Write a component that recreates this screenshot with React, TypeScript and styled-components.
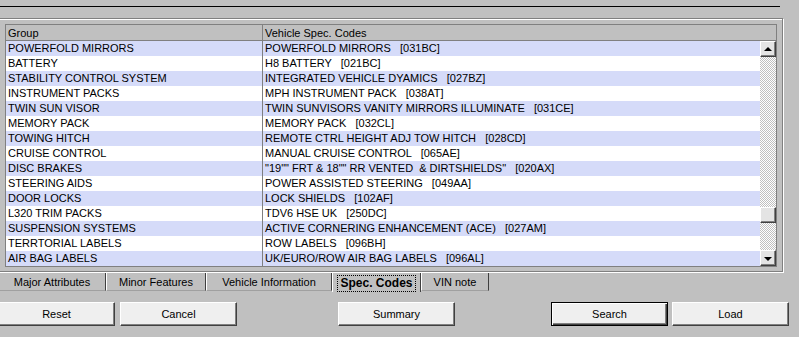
import React from "react";
import styled, { createGlobalStyle } from "styled-components";

const GlobalStyle = createGlobalStyle`
  html, body {
    margin: 0;
    padding: 0;
    background: #c0c0c0;
    overflow: hidden;
  }
  body {
    font-family: "Liberation Sans", Arial, sans-serif;
    font-size: 11px;
    color: #000;
  }
`;

const Screen = styled.div`
  width: 799px;
  height: 337px;
  overflow: hidden;
  background: #c0c0c0;
  display: flex;
  flex-direction: column;
`;

const TopRule = styled.div`
  margin-top: 6px;
  width: 780px;
  height: 1px;
  background: #000;
  flex: none;
`;

const Frame = styled.div`
  margin-top: 11px;
  margin-left: -2px;
  width: 785px;
  height: 254px;
  box-sizing: border-box;
  border: 1px solid #808080;
  box-shadow: 1px 1px 0 #fff, inset 1px 1px 0 #fff;
  padding: 5px 0 0 6px;
  flex: none;
`;

const ListBox = styled.div`
  width: 772px;
  height: 243px;
  box-sizing: border-box;
  border: 1px solid #808080;
  display: flex;
  flex-direction: column;
  background: #fff;
`;

const HeaderRow = styled.div`
  display: flex;
  height: 16px;
  box-sizing: border-box;
  background: #c0c0c0;
  border-bottom: 1px solid #808080;
  flex: none;
`;

const HeaderCell = styled.div<{ $w?: number }>`
  ${(p) => (p.$w ? `width: ${p.$w}px; flex: none;` : "flex: 1;")}
  box-sizing: border-box;
  padding: 1px 0 0 2px;
  line-height: 15px;
  white-space: pre;
  ${(p) => (p.$w ? "border-right: 1px solid #808080;" : "")}
`;

const Body = styled.div`
  display: flex;
  flex: 1;
`;

const Rows = styled.div`
  width: 754px;
  display: flex;
  flex-direction: column;
`;

const Row = styled.div<{ $alt: boolean }>`
  display: flex;
  height: 15px;
  background: ${(p) => (p.$alt ? "#d5dbf9" : "#ffffff")};
`;

const Cell = styled.div<{ $w?: number }>`
  ${(p) => (p.$w ? `width: ${p.$w}px; flex: none; border-right: 1px solid #7f7f7f;` : "flex: 1;")}
  box-sizing: border-box;
  padding-left: 2px;
  line-height: 15px;
  white-space: pre;
  overflow: hidden;
`;

const ScrollBar = styled.div`
  width: 16px;
  display: flex;
  flex-direction: column;
  background: repeating-conic-gradient(#c0c0c0 0 25%, #ffffff 0 50%) 0 0 / 2px 2px;
`;

const ScrollButton = styled.div`
  width: 16px;
  height: 16px;
  box-sizing: border-box;
  background: #e4e4e4;
  border-top: 1px solid #fff;
  border-left: 1px solid #fff;
  border-right: 1px solid #404040;
  border-bottom: 1px solid #404040;
  box-shadow: inset -1px -1px 0 #808080;
  display: flex;
  align-items: center;
  justify-content: center;
  flex: none;
`;

const Track = styled.div`
  flex: 1;
  display: flex;
  flex-direction: column;
`;

const Thumb = styled(ScrollButton)`
  margin-top: 150px;
`;

const Arrow = styled.div<{ $down?: boolean }>`
  width: 0;
  height: 0;
  border-left: 4px solid transparent;
  border-right: 4px solid transparent;
  ${(p) =>
    p.$down
      ? "border-top: 4px solid #000; margin-top: 1px;"
      : "border-bottom: 4px solid #000; margin-top: -1px;"}
`;

const TabStrip = styled.div`
  margin-top: 1px;
  margin-left: -2px;
  display: flex;
  align-items: flex-start;
  height: 19px;
  flex: none;
`;

const Tab = styled.div<{ $w: number; $active?: boolean }>`
  width: ${(p) => p.$w}px;
  height: ${(p) => (p.$active ? 19 : 18)}px;
  box-sizing: border-box;
  padding-top: 1px;
  border-left: 1px solid #fff;
  border-right: 1px solid #404040;
  ${(p) => (p.$active ? "" : "border-bottom: 1px solid #a0a0a0;")}
  display: flex;
  align-items: center;
  justify-content: center;
  font-weight: ${(p) => (p.$active ? "bold" : "normal")};
  font-size: ${(p) => (p.$active ? "12px" : "11px")};
  white-space: nowrap;
  flex: none;
`;

const FocusLabel = styled.span`
  border: 1px dotted #000;
  padding: 1px 2px 1px 2px;
  line-height: 13px;
`;

const ButtonRow = styled.div`
  margin-top: 10px;
  margin-left: -2px;
  display: flex;
  flex: none;
`;

const Button = styled.div<{ $gap?: number; $default?: boolean }>`
  margin-left: ${(p) => p.$gap ?? 0}px;
  width: 117px;
  height: 24px;
  box-sizing: border-box;
  background: #efefef;
  display: flex;
  align-items: center;
  justify-content: center;
  ${(p) =>
    p.$default
      ? `border: 1px solid #000;
         box-shadow: inset 1px 1px 0 #fff, inset -1px -1px 0 #404040, inset -2px -2px 0 #808080;`
      : `border-top: 1px solid #fff;
         border-left: 1px solid #fff;
         border-right: 1px solid #404040;
         border-bottom: 1px solid #404040;
         box-shadow: inset -1px -1px 0 #808080;`}
  flex: none;
`;

const rows: [string, string][] = [
  ["POWERFOLD MIRRORS", "POWERFOLD MIRRORS   [031BC]"],
  ["BATTERY", "H8 BATTERY   [021BC]"],
  ["STABILITY CONTROL SYSTEM", "INTEGRATED VEHICLE DYAMICS   [027BZ]"],
  ["INSTRUMENT PACKS", "MPH INSTRUMENT PACK   [038AT]"],
  ["TWIN SUN VISOR", "TWIN SUNVISORS VANITY MIRRORS ILLUMINATE   [031CE]"],
  ["MEMORY PACK", "MEMORY PACK   [032CL]"],
  ["TOWING HITCH", "REMOTE CTRL HEIGHT ADJ TOW HITCH   [028CD]"],
  ["CRUISE CONTROL", "MANUAL CRUISE CONTROL   [065AE]"],
  ["DISC BRAKES", "\"19\"\" FRT & 18\"\" RR VENTED  & DIRTSHIELDS\"   [020AX]"],
  ["STEERING AIDS", "POWER ASSISTED STEERING   [049AA]"],
  ["DOOR LOCKS", "LOCK SHIELDS   [102AF]"],
  ["L320 TRIM PACKS", "TDV6 HSE UK   [250DC]"],
  ["SUSPENSION SYSTEMS", "ACTIVE CORNERING ENHANCEMENT (ACE)   [027AM]"],
  ["TERRTORIAL LABELS", "ROW LABELS   [096BH]"],
  ["AIR BAG LABELS", "UK/EURO/ROW AIR BAG LABELS   [096AL]"],
];

const tabs: { label: string; w: number; active?: boolean }[] = [
  { label: "Major Attributes", w: 108 },
  { label: "Minor Features", w: 100 },
  { label: "Vehicle Information", w: 126 },
  { label: "Spec. Codes", w: 89, active: true },
  { label: "VIN note", w: 68 },
];

export default function App() {
  return (
    <>
      <GlobalStyle />
      <Screen>
        <TopRule />
        <Frame>
          <ListBox>
            <HeaderRow>
              <HeaderCell $w={257}>Group</HeaderCell>
              <HeaderCell>Vehicle Spec. Codes</HeaderCell>
            </HeaderRow>
            <Body>
              <Rows>
                {rows.map(([g, c], i) => (
                  <Row key={i} $alt={i % 2 === 0}>
                    <Cell $w={257}>{g}</Cell>
                    <Cell>{c}</Cell>
                  </Row>
                ))}
              </Rows>
              <ScrollBar>
                <ScrollButton>
                  <Arrow />
                </ScrollButton>
                <Track>
                  <Thumb />
                </Track>
                <ScrollButton>
                  <Arrow $down />
                </ScrollButton>
              </ScrollBar>
            </Body>
          </ListBox>
        </Frame>
        <TabStrip>
          {tabs.map((t) => (
            <Tab key={t.label} $w={t.w} $active={t.active}>
              {t.active ? <FocusLabel>{t.label}</FocusLabel> : t.label}
            </Tab>
          ))}
        </TabStrip>
        <ButtonRow>
          <Button>Reset</Button>
          <Button $gap={5}>Cancel</Button>
          <Button $gap={101}>Summary</Button>
          <Button $gap={96} $default>
            Search
          </Button>
          <Button $gap={4}>Load</Button>
        </ButtonRow>
      </Screen>
    </>
  );
}
